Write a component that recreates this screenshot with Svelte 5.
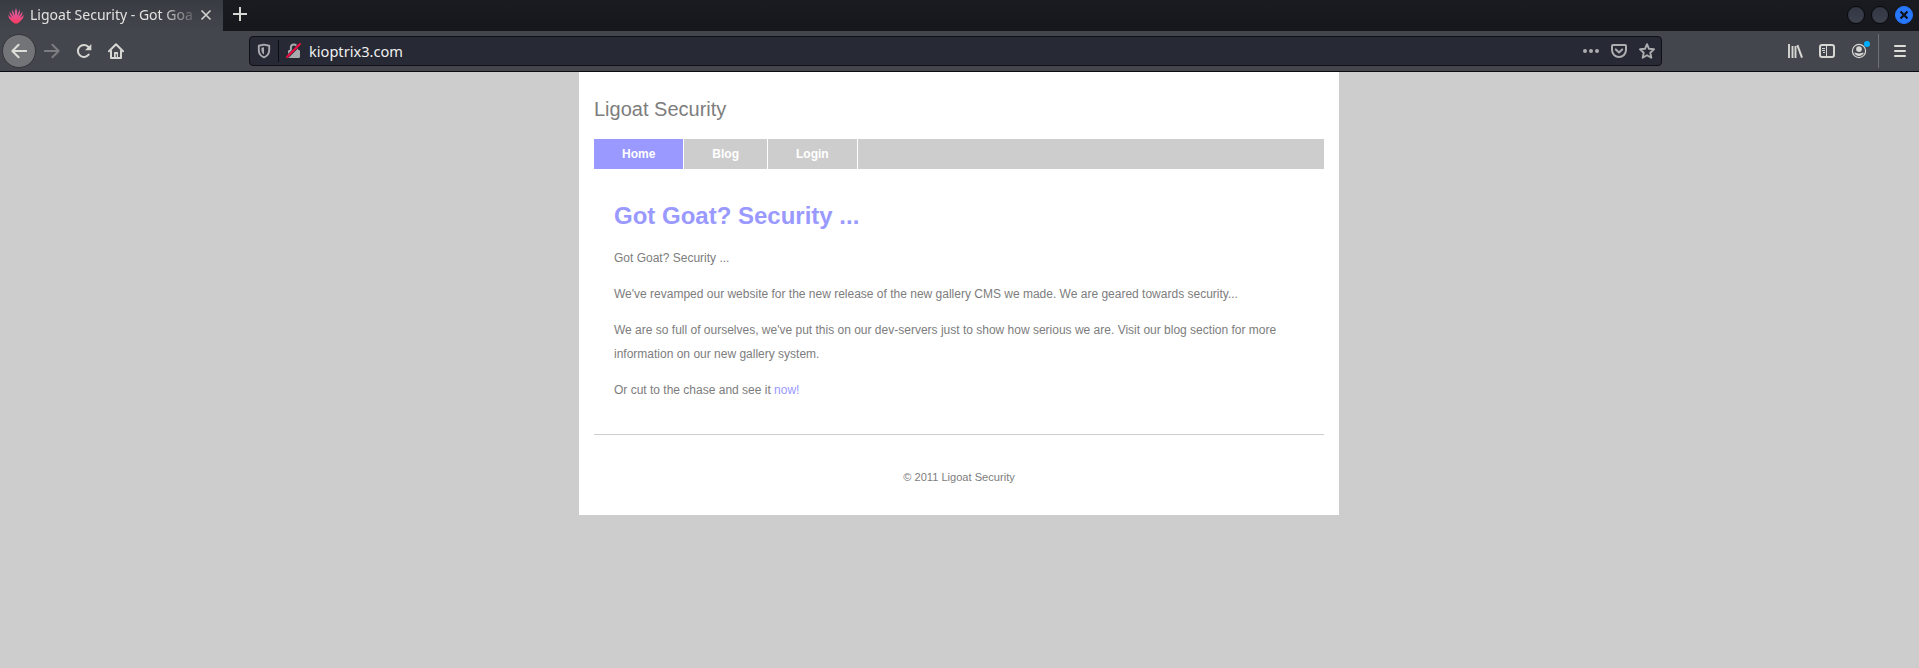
<script>
  const nav = ['Home', 'Blog', 'Login'];
</script>

<div class="browser">
  <div class="tabs">
    <div class="tab">
      <svg class="favicon" width="16" height="16" viewBox="0 0 16 16">
        <defs>
          <linearGradient id="petal" x1="0" y1="0" x2="0" y2="16" gradientUnits="userSpaceOnUse">
            <stop offset="0" stop-color="#c9659c" />
            <stop offset=".6" stop-color="#ec4a86" />
            <stop offset="1" stop-color="#ff3a55" />
          </linearGradient>
        </defs>
        <path fill="url(#petal)" d="M8 0 9.2 3.5 9 7.5 11.8 1.2 12 4.5 10.5 8.7 14.6 3.6 14.1 6.8 12 10 16 7 14.8 10.4 12 13.5 9.5 15.6H6.5L4 13.5 1.2 10.4 0 7 4 10 1.9 6.8 1.4 3.6 5.5 8.7 4 4.5 4.2 1.2 7 7.5 6.8 3.5Z" />
      </svg>
      <span class="tab-title">Ligoat Security - Got Goa</span>
      <svg class="tab-close" width="12" height="12" viewBox="0 0 12 12"><path d="M1.5 1.5 10.5 10.5M10.5 1.5 1.5 10.5" stroke="#cfcfcc" stroke-width="1.7" /></svg>
    </div>
    <svg class="new-tab" width="14" height="14" viewBox="0 0 14 14"><path d="M7 0V14M0 7H14" stroke="#d6d6d0" stroke-width="2" /></svg>
    <div class="window-buttons">
      <i></i><i></i>
      <i class="close"><svg width="10" height="10" viewBox="0 0 10 10"><path d="M1.5 1.5 8.5 8.5M8.5 1.5 1.5 8.5" stroke="#10131c" stroke-width="2.4" /></svg></i>
    </div>
  </div>

  <div class="toolbar">
    <div class="back">
      <svg width="16" height="16" viewBox="0 0 16 16"><path d="M15.3 8H1.5M7.6 1.7 1.4 8 7.6 14.3" fill="none" stroke="#deded9" stroke-width="2" stroke-linecap="round" stroke-linejoin="round" /></svg>
    </div>
    <svg class="forward" width="16" height="16" viewBox="0 0 16 16"><path d="M.8 8H14.5M8.4 1.7 14.6 8 8.4 14.3" fill="none" stroke="#7c7d81" stroke-width="2" stroke-linecap="round" stroke-linejoin="round" /></svg>
    <svg class="reload" width="16" height="16" viewBox="0 0 16 16"><path d="M12.7 11.6A6 6 0 1 1 12.2 3.7L13.4 5" fill="none" stroke="#d6d6d2" stroke-width="2" stroke-linecap="round" /><path d="M15.3 1V7.2H9Z" fill="#d6d6d2" /></svg>
    <svg class="home" width="16" height="16" viewBox="0 0 16 16"><path d="M1 8.3 8 1.3 15 8.3M3 7.8V15H13V7.8" fill="none" stroke="#d6d6d2" stroke-width="2" stroke-linecap="round" stroke-linejoin="round" /><path d="M6 14V9.8A.8.8 0 0 1 6.8 9H9.2A.8.8 0 0 1 10 9.8V14H8.8V11H7.7V14Z" fill="#d6d6d2" /></svg>

    <div class="url">
      <svg class="shield" width="14" height="16" viewBox="0 0 14 16"><path d="M7 1.6 12.2 2.8V7C12.2 10.5 10.3 13 7 14.4 3.7 13 1.8 10.5 1.8 7V2.8Z" fill="none" stroke="#a9aaad" stroke-width="1.9" stroke-linejoin="round" /><path d="M7 4.3V11.6C5.3 10.5 4.4 8.8 4.4 7V4.8Z" fill="#a9aaad" /></svg>
      <span class="bar"></span>
      <svg class="lock" width="16" height="16" viewBox="0 0 16 16"><path d="M4.9 8V4.6A3.1 3.1 0 0 1 11.1 4.6V8" fill="none" stroke="#a9aaad" stroke-width="2" /><rect x="2" y="7" width="12" height="8" rx="1.2" fill="#a9aaad" /><path d="M1.6 13.6 13.8 1.4" stroke="#272935" stroke-width="3" /><path d="M1 14 14 1" stroke="#f00c40" stroke-width="2" stroke-linecap="round" /></svg>
      <span class="address">kioptrix3.com</span>
      <div class="page-actions">
        <svg width="16" height="16" viewBox="0 0 16 16" fill="#acadaf"><circle cx="2" cy="8" r="2" /><circle cx="8" cy="8" r="2" /><circle cx="14" cy="8" r="2" /></svg>
        <svg width="16" height="16" viewBox="0 0 16 16" fill="none" stroke="#acadaf" stroke-width="2" stroke-linecap="round" stroke-linejoin="round"><path d="M2 2H14A1 1 0 0 1 15 3V7A7 7 0 0 1 1 7V3A1 1 0 0 1 2 2Z" /><path d="M4.8 6.4 8 9.4 11.2 6.4" /></svg>
        <svg width="16" height="16" viewBox="0 0 16 16" fill="none" stroke="#acadaf" stroke-width="1.9" stroke-linejoin="round"><path d="M8 1.2 10 5.8 15 6.3 11.3 9.7 12.3 14.7 8 12.2 3.7 14.7 4.7 9.7 1 6.3 6 5.8Z" /></svg>
      </div>
    </div>

    <div class="tools">
      <svg width="16" height="16" viewBox="0 0 16 16" stroke="#d6d6d2" fill="none"><path d="M2 1V15M5.5 3V15M8.5 3V15" stroke-width="1.9" /><path d="M10.4 2.2 15 14.6" stroke-width="2" /></svg>
      <svg width="16" height="16" viewBox="0 0 16 16" stroke="#d6d6d2" fill="none"><rect x="1" y="2" width="14" height="12" rx="2" stroke-width="2" /><path d="M7.5 2V14" stroke-width="1" /><path d="M3 5.5H6M3 7.5H6M4 9.5H6" stroke-width="1" /></svg>
      <div class="account">
        <svg width="16" height="16" viewBox="0 0 16 16"><circle cx="8" cy="8" r="6.6" fill="none" stroke="#d6d6d2" stroke-width="1.2" /><circle cx="8" cy="6.1" r="2.9" fill="#d6d6d2" /><path d="M3.2 9.5C4.8 9.7 5.7 10.4 8 10.4S11.2 9.7 12.8 9.5C12.2 11.6 10.3 13 8 13S3.8 11.6 3.2 9.5Z" fill="#d6d6d2" /></svg>
        <b></b>
      </div>
      <span class="divider"></span>
      <svg class="menu" width="12" height="14" viewBox="0 0 12 14"><path d="M1 2H11M1 7H11M1 12H11" stroke="#deded9" stroke-width="2" stroke-linecap="round" /></svg>
    </div>
  </div>

  <main>
    <div class="site">
      <div class="site-title">Ligoat Security</div>
      <nav>
        {#each nav as item, i}
          <a class:active={i === 0}>{item}</a>
        {/each}
      </nav>
      <article>
        <h1>Got Goat? Security ...</h1>
        <p>Got Goat? Security ...</p>
        <p>We've revamped our website for the new release of the new gallery CMS we made. We are geared towards security...</p>
        <p>We are so full of ourselves, we've put this on our dev-servers just to show how serious we are. Visit our blog section for more information on our new gallery system.</p>
        <p>Or cut to the chase and see it <a>now!</a></p>
      </article>
      <footer>© 2011 Ligoat Security</footer>
    </div>
  </main>
</div>

<style>
  :global(body) { background: #cdcdcd; }
  .browser { height: 668px; overflow: hidden; display: flex; flex-direction: column; font-family: "Noto Sans", sans-serif; }
  svg { display: block; flex: none; }

  .tabs { height: 31px; display: flex; align-items: flex-start; background: linear-gradient(#1a1b21, #16171d); }
  .tab { box-sizing: border-box; width: 223px; height: 31px; display: flex; align-items: flex-start; padding-left: 8px; background: linear-gradient(#393b42, #44464d); }
  .favicon { margin-top: 8px; }
  .tab-title { width: 165px; margin: 5px 5px 0 6px; font-size: 14px; line-height: 20px; color: #e2e2df; white-space: nowrap; mask-image: linear-gradient(to right, #000 130px, transparent 172px); }
  .tab-close { margin-top: 9px; }
  .new-tab { margin: 7px 0 0 10px; }
  .window-buttons { margin: 6px 6px 0 auto; display: flex; gap: 6px; }
  .window-buttons i { box-sizing: border-box; width: 18px; height: 18px; border-radius: 50%; border: 1px solid #08090d; background: linear-gradient(#323743, #3d414e); display: flex; align-items: center; justify-content: center; }
  .window-buttons .close { background: #2777ff; border-color: #2777ff; }

  .toolbar { box-sizing: border-box; height: 41px; display: flex; align-items: center; background: #44464d; border-bottom: 1px solid #0b0c11; padding-left: 2px; }
  .back { box-sizing: border-box; width: 34px; height: 34px; border-radius: 50%; background: #737477; border: 1px solid #34353a; display: flex; align-items: center; justify-content: center; }
  .forward { margin-left: 8px; }
  .reload { margin-left: 16px; }
  .home { margin-left: 16px; }
  .url { box-sizing: border-box; width: 1413px; height: 30px; margin-left: 125px; border: 1px solid #0f1016; border-radius: 4px; background: #272935; display: flex; align-items: center; padding: 0 6px 0 7px; }
  .bar { width: 1px; height: 22px; margin: 0 7px 0 7px; background: #0c0d13; }
  .address { margin-left: 7px; font-size: 14.6px; line-height: 20px; color: #f0f0ee; }
  .page-actions { display: flex; gap: 12px; margin-left: auto; }
  .tools { display: flex; align-items: center; margin-left: 125px; gap: 16px; }
  .account { position: relative; }
  .account b { position: absolute; left: 13px; top: -2px; width: 6px; height: 6px; border-radius: 50%; background: #00aeff; }
  .divider { width: 1px; height: 34px; margin-left: -5px; background: #707176; }
  .menu { margin-left: -1px; }

  main { flex: 1; background: #cdcdcd; font-family: "Liberation Sans", Arial, sans-serif; color: #7d7d7d; }
  .site { box-sizing: border-box; width: 760px; height: 443px; margin-left: 579px; padding: 26px 15px 0; background: #fff; }
  .site-title { font-size: 20px; line-height: 22px; }
  nav { height: 30px; margin-top: 19px; display: flex; background: #cdcdcd; }
  nav a { padding: 0 28px; border-right: 1px solid #fff; font-size: 12px; font-weight: bold; line-height: 30px; color: #fff; }
  nav .active { background: #9999ff; }
  article { height: 265px; padding: 0 20px; border-bottom: 1px solid #cdcdcd; display: flow-root; }
  h1 { margin: 33px 0 17px; font-size: 24px; line-height: 27px; color: #9999ff; }
  p { margin: 0 0 12px; font-size: 12px; line-height: 24px; }
  p a { color: #9999ff; }
  footer { margin-top: 36px; text-align: center; font-size: 11.1px; line-height: 12px; }
</style>
